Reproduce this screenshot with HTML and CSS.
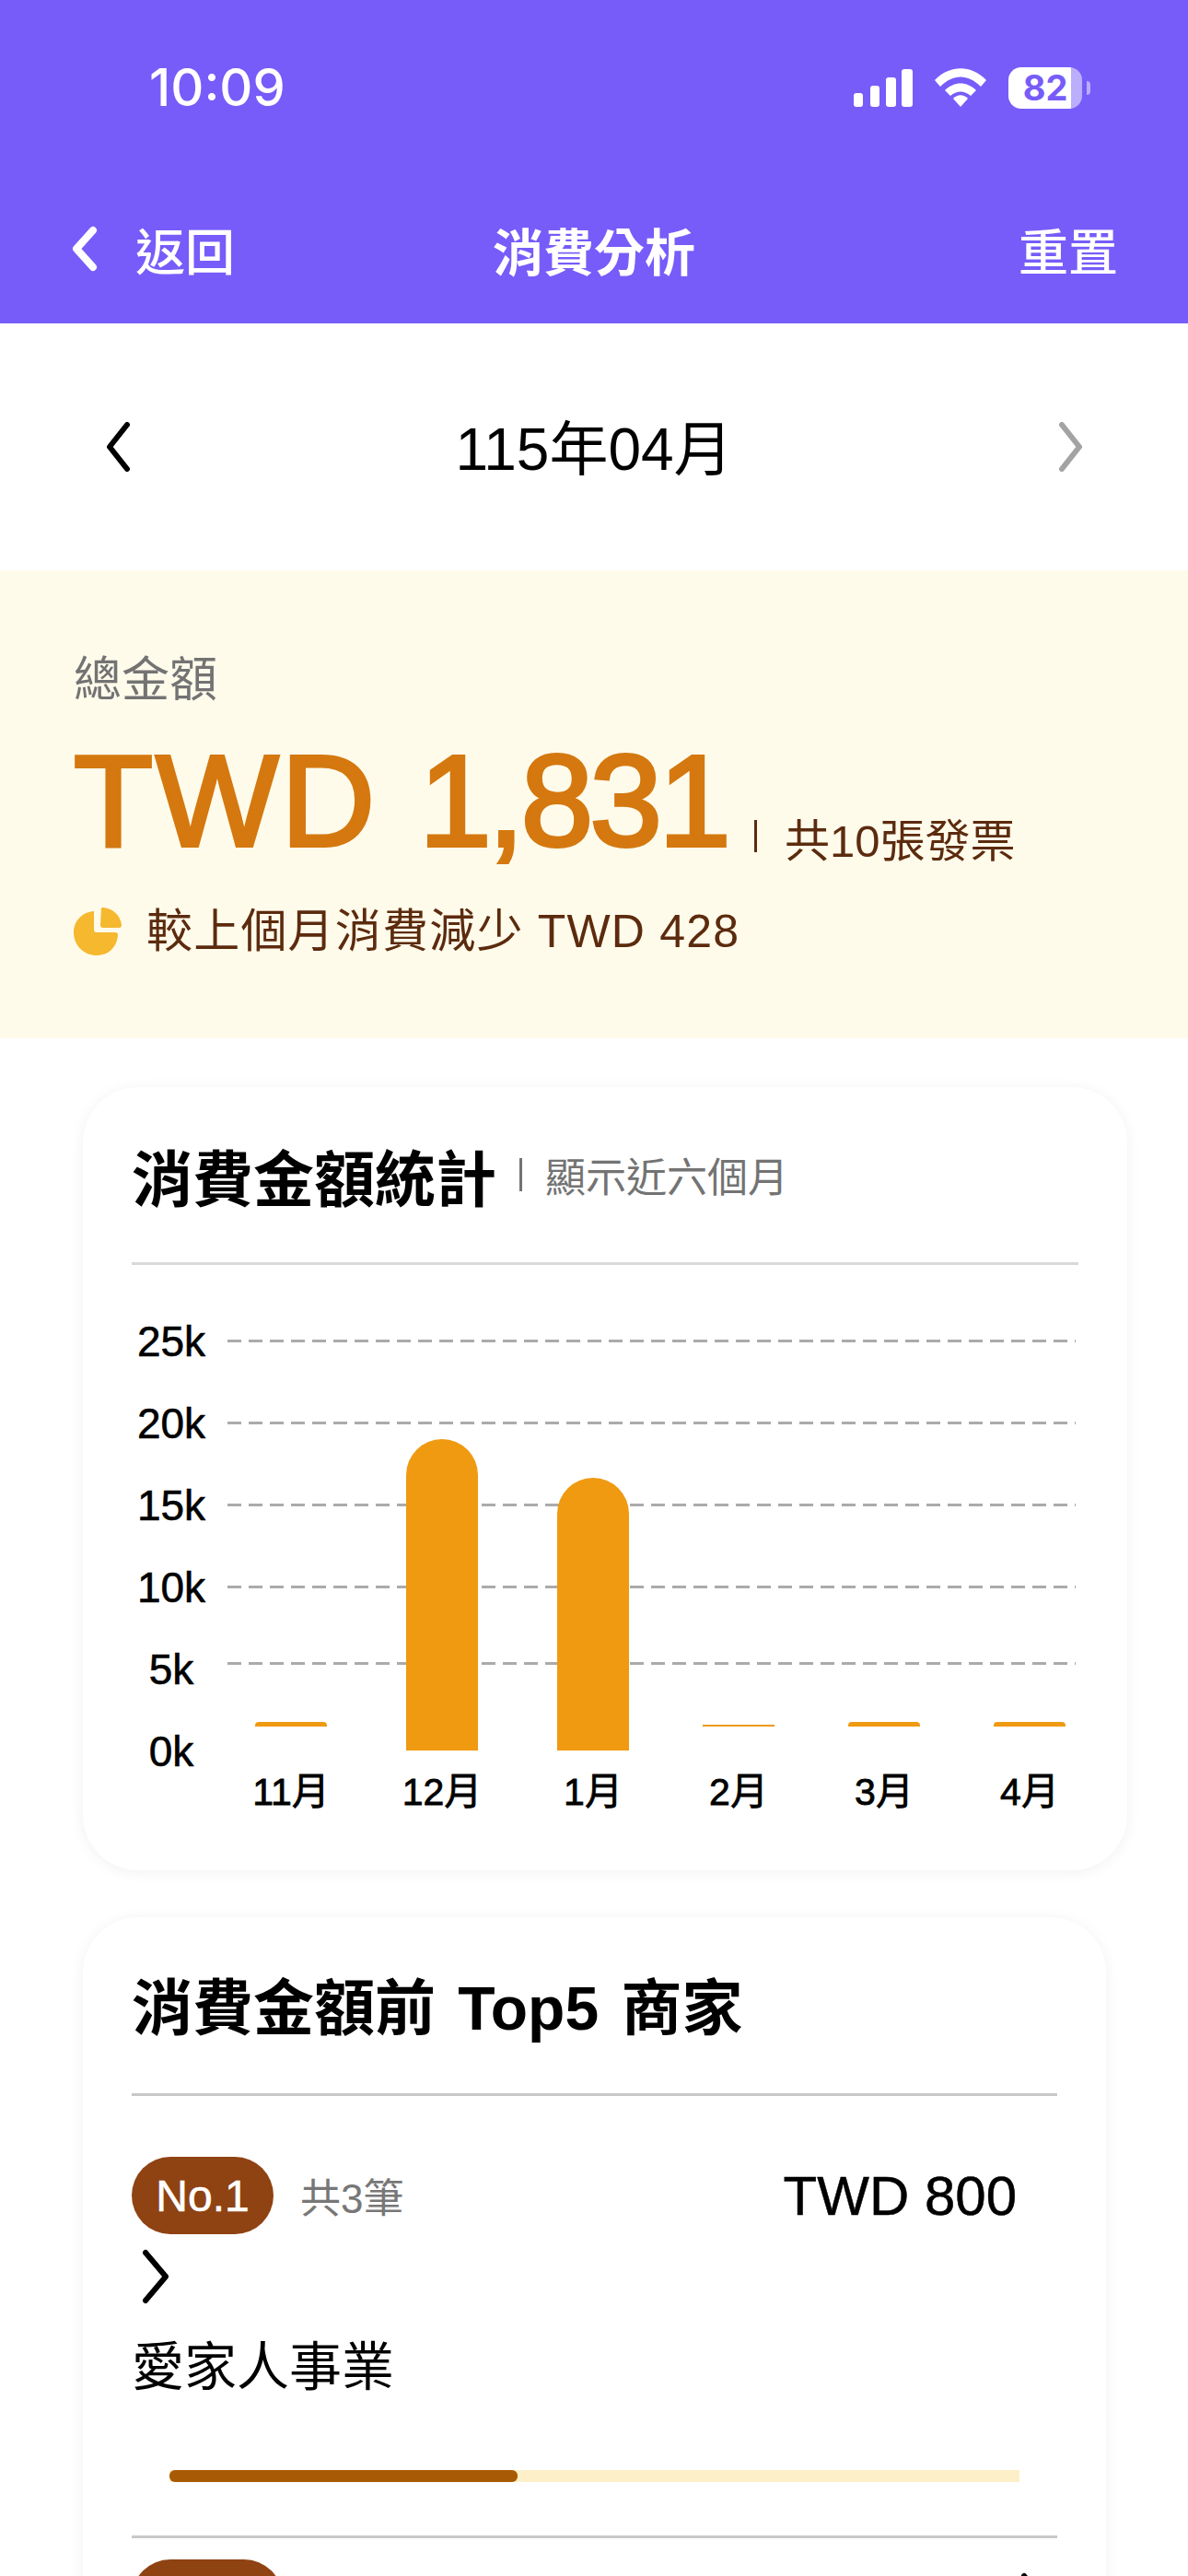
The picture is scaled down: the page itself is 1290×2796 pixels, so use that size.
FILE: index.html
```html
<!DOCTYPE html>
<html lang="zh-Hant">
<head>
    <meta charset="UTF-8">
    <title>消費分析</title>
    <link rel="stylesheet" href="styles.css">
</head>
<body>
    <header class="top-bar">
        <div class="status-bar">
            <span class="clock">10:09</span>
            <div class="status-icons">
                <svg class="signal" width="64" height="41" viewBox="0 0 64 41">
                    <rect x="0" y="26" width="10" height="15" rx="3"/>
                    <rect x="18" y="18" width="10" height="23" rx="3"/>
                    <rect x="35" y="9" width="11" height="32" rx="3"/>
                    <rect x="52" y="0" width="12" height="41" rx="3"/>
                </svg>
                <svg class="wifi" width="56" height="42" viewBox="0 0 56 42">
                    <path d="M0 13 C16 -4 40 -4 56 13 L50 20 C36 6 20 6 6 20 Z"/>
                    <path d="M11 24 C21 14 35 14 45 24 L39 30 C32 24 24 24 17 30 Z"/>
                    <path d="M20 33 C25 28 31 28 36 33 L28 42 Z"/>
                </svg>
                <div class="battery">
                    <div class="battery-body">
                        <span class="battery-num">82</span>
                    </div>
                    <div class="battery-cap"></div>
                </div>
            </div>
        </div>
        <nav class="nav-row">
            <div class="nav-back">
                <svg width="32" height="50" viewBox="0 0 32 50">
                    <path d="M25 5 L7 25 L25 45" fill="none" stroke="#fff" stroke-width="8" stroke-linecap="round" stroke-linejoin="round"/>
                </svg>
                <span>返回</span>
            </div>
            <div class="nav-title">消費分析</div>
            <div class="nav-reset">重置</div>
        </nav>
    </header>

    <section class="month-row">
        <svg width="30" height="54" viewBox="0 0 30 54">
            <path d="M26 3 L7 27 L26 51" fill="none" stroke="#000" stroke-width="6" stroke-linecap="round" stroke-linejoin="round"/>
        </svg>
        <div class="month-label">115年04月</div>
        <svg width="30" height="54" viewBox="0 0 30 54">
            <path d="M5 3 L24 27 L5 51" fill="none" stroke="#a3a3a3" stroke-width="6" stroke-linecap="round" stroke-linejoin="round"/>
        </svg>
    </section>

    <section class="summary">
        <div class="summary-label">總金額</div>
        <div class="summary-total">
            <span class="total-amount"><span class="total-cur">TWD</span> <span class="total-num">1,831</span></span>
            <span class="total-sep"></span>
            <span class="total-count">共10張發票</span>
        </div>
        <div class="summary-compare">
            <svg width="52" height="52" viewBox="0 0 52 52">
                <path d="M22 4 C9 5 0 15 0 27 C0 41 11 52 25 52 C38 52 47 43 48 30 C48 28 47 27 45 27 L25 27 C23 27 22 26 22 24 Z" fill="#f5b82e"/>
                <path d="M30 1 C30 0 31 0 32 0 C43 1 51 9 52 19 C52 21 51 22 49 22 L32 22 C30 22 29 21 29 19 Z" fill="#f5b82e"/>
            </svg>
            <span>較上個月消費減少 TWD 428</span>
        </div>
    </section>

    <section class="card chart-card">
        <div class="card-head">
            <h2>消費金額統計</h2>
            <span class="head-sep"></span>
            <span class="head-note">顯示近六個月</span>
        </div>
        <div class="chart">
            <div class="grid">
                <div class="grid-line"><span>25k</span><i></i></div>
                <div class="grid-line"><span>20k</span><i></i></div>
                <div class="grid-line"><span>15k</span><i></i></div>
                <div class="grid-line"><span>10k</span><i></i></div>
                <div class="grid-line line-low"><span>5k</span><i></i></div>
                <div class="grid-line"><span>0k</span></div>
            </div>
            <div class="bars">
                <div class="bar-col"><div class="bar bar-tiny"></div><div class="bar-gap"></div><span>11月</span></div>
                <div class="bar-col"><div class="bar bar-tall" style="height: 338px"></div><span>12月</span></div>
                <div class="bar-col"><div class="bar bar-tall" style="height: 296px"></div><span>1月</span></div>
                <div class="bar-col"><div class="bar bar-thin"></div><div class="bar-gap"></div><span>2月</span></div>
                <div class="bar-col"><div class="bar bar-tiny"></div><div class="bar-gap"></div><span>3月</span></div>
                <div class="bar-col"><div class="bar bar-tiny"></div><div class="bar-gap"></div><span>4月</span></div>
            </div>
        </div>
    </section>

    <section class="card shops-card">
        <div class="card-head">
            <h2>消費金額前 Top5 商家</h2>
        </div>
        <div class="shop">
            <div class="shop-top">
                <span class="rank">No.1</span>
                <span class="shop-count">共3筆</span>
                <span class="shop-amount">TWD 800</span>
            </div>
            <svg class="shop-arrow" width="34" height="60" viewBox="0 0 34 60">
                <path d="M5 4 L27 30 L5 56" fill="none" stroke="#000" stroke-width="6" stroke-linecap="round" stroke-linejoin="round"/>
            </svg>
            <div class="shop-name">愛家人事業</div>
            <div class="progress"><div class="progress-fill" style="width: 41%"></div></div>
        </div>
        <div class="shop shop-next">
            <div class="shop-top">
                <span class="rank rank-wide"></span>
                <svg class="shop-arrow-end" width="34" height="60" viewBox="0 0 34 60">
                    <path d="M5 4 L27 30 L5 56" fill="none" stroke="#000" stroke-width="6" stroke-linecap="round" stroke-linejoin="round"/>
                </svg>
            </div>
        </div>
    </section>
</body>
</html>
```

FILE: styles.css
```css
* {
    box-sizing: border-box;
}
html, body {
    height: 2796px;
    overflow: hidden;
}
body {
    margin: 0;
    background-color: #fff;
    font-family: "Liberation Sans", "Noto Sans CJK TC", sans-serif;
    color: #000;
}

/* purple header */
.top-bar {
    height: 351px;
    background-color: #775cfa;
    color: #fff;
    padding: 60px 76px 0 76px;
}
.status-bar {
    display: flex;
    justify-content: space-between;
    align-items: center;
    height: 70px;
    padding: 0 30px 0 86px;
}
.clock {
    font-family: Inter, sans-serif;
    font-size: 56px;
    font-weight: 500;
}
.status-icons {
    display: flex;
    align-items: center;
    gap: 24px;
    fill: #fff;
}
.battery {
    display: flex;
    align-items: center;
    gap: 5px;
}
.battery-body {
    width: 80px;
    height: 45px;
    border-radius: 14px;
    background: linear-gradient(to right, #fff 85%, #bbaefd 85%);
    display: flex;
    align-items: center;
    justify-content: center;
}
.battery-num {
    font-family: Inter, sans-serif;
    font-size: 38px;
    font-weight: 700;
    color: #775cfa;
}
.battery-cap {
    width: 4px;
    height: 15px;
    border-radius: 0 8px 8px 0;
    background-color: #bbaefd;
}
.nav-row {
    display: grid;
    grid-template-columns: 1fr auto 1fr;
    align-items: center;
    margin-top: 100px;
    height: 60px;
}
.nav-back {
    display: flex;
    align-items: center;
    gap: 39px;
    font-size: 54px;
    font-weight: 500;
}
.nav-title {
    font-size: 55px;
    font-weight: 700;
}
.nav-reset {
    font-size: 54px;
    font-weight: 500;
    text-align: right;
}

/* month picker */
.month-row {
    height: 268px;
    display: flex;
    justify-content: space-between;
    align-items: center;
    padding: 0 112px;
}
.month-label {
    font-size: 64px;
    padding-bottom: 6px;
}

/* yellow summary block */
.summary {
    height: 508px;
    background-color: #fffbeb;
    padding: 87px 80px 0;
}
.summary-label {
    font-size: 52px;
    line-height: 64px;
    color: #737373;
}
.summary-total {
    display: flex;
    align-items: flex-end;
    margin-top: 19px;
}
.total-amount {
    font-size: 141px;
    line-height: 160px;
    -webkit-text-stroke: 4px #d4780f;
    color: #d4780f;
}
.total-cur {
    letter-spacing: 3px;
    margin-right: 6px;
}
.total-num {
    letter-spacing: -3.6px;
}
.total-sep {
    width: 3px;
    height: 35px;
    margin: 0 30px 24px 29px;
    background-color: #5c2b0e;
}
.total-count {
    font-size: 49px;
    line-height: 60px;
    margin-bottom: 6px;
    color: #5c2b0e;
}
.summary-compare {
    display: flex;
    align-items: center;
    gap: 27px;
    margin-top: 26px;
    font-size: 50px;
    line-height: 72px;
    letter-spacing: 1.2px;
    color: #5c2b0e;
}

/* white cards */
.card {
    margin-left: 90px;
    background-color: #fff;
    border-radius: 60px;
    box-shadow: 0 2px 16px rgba(0,0,0,0.06);
    padding: 0 53px;
}
.chart-card {
    width: 1134px;
    height: 850px;
    margin-top: 53px;
}
.shops-card {
    width: 1111px;
    height: 800px;
    margin-top: 51px;
}
.card-head {
    display: flex;
    align-items: center;
    height: 193px;
    border-bottom: 3px solid #d9d9d9;
}
.shops-card .card-head {
    height: 194px;
    padding-bottom: 6px;
    margin-bottom: 43px;
    border-bottom-color: #c8c8c8;
}
.card-head h2 {
    margin: 0;
    font-size: 66px;
    font-weight: 700;
    word-spacing: 6px;
}
.head-sep {
    width: 3px;
    height: 36px;
    margin: 0 25px 0 25px;
    background-color: #737373;
}
.head-note {
    font-size: 44px;
    color: #737373;
}

/* bar chart */
.chart {
    position: relative;
    height: 600px;
}
.grid {
    position: absolute;
    left: 0;
    right: 0;
    top: 38px;
}
.grid-line {
    display: flex;
    align-items: center;
    height: 89px;
    font-size: 46px;
    -webkit-text-stroke: 0.6px #000;
}
.grid-line span {
    width: 86px;
    margin-right: 18px;
    text-align: center;
}
.grid-line i {
    flex: 1;
    height: 3px;
    margin-right: 3px;
    background: repeating-linear-gradient(to right, #ababab 0, #ababab 15px, transparent 15px, transparent 23px);
}
.line-low i {
    margin-bottom: 12px;
}
.bars {
    position: absolute;
    left: 134px;
    top: 0;
    height: 600px;
    display: flex;
    gap: 80px;
    align-items: flex-end;
}
.bar-col {
    width: 78px;
    display: flex;
    flex-direction: column;
    align-items: center;
    padding-bottom: 4px;
}
.bar-col:nth-child(-n+2) {
    margin-right: 6px;
}
.bar-col span {
    margin-top: 21px;
    white-space: nowrap;
    font-size: 41px;
    line-height: 48px;
    -webkit-text-stroke: 0.8px #000;
}
.bar {
    width: 78px;
    background-color: #ef9a11;
}
.bar-tall {
    border-radius: 39px 39px 0 0;
}
.bar-tiny {
    height: 5px;
    border-radius: 4px 4px 0 0;
}
.bar-thin {
    height: 2px;
}
.bar-gap {
    height: 26px;
}

/* shop ranking */
.shop {
    border-bottom: 3px solid #c8c8c8;
    padding-top: 23px;
    height: 437px;
}
.shop-top {
    display: flex;
    align-items: center;
    padding-right: 44px;
}
.rank {
    width: 154px;
    height: 84px;
    border-radius: 42px;
    background-color: #8f4212;
    color: #fff;
    font-size: 48px;
    -webkit-text-stroke: 0.6px #fff;
    display: flex;
    align-items: center;
    justify-content: center;
}
.rank-wide {
    width: 164px;
}
.shop-count {
    margin-left: 29px;
    font-size: 44px;
    color: #777;
}
.shop-amount {
    margin-left: auto;
    font-size: 60px;
    -webkit-text-stroke: 0.5px #000;
}
.shop-arrow {
    display: block;
    margin: 16px 0 0 10px;
}
.shop-next {
    border-bottom: none;
}
.shop-next .shop-top {
    align-items: flex-start;
    padding-right: 7px;
}
.shop-arrow-end {
    margin: 14px 0 0 auto;
}
.shop-name {
    margin-top: 32px;
    font-size: 57px;
    line-height: 72px;
}
.progress {
    height: 13px;
    margin: 76px 41px 0 41px;
    background-color: #fdf0c8;
}
.progress-fill {
    height: 13px;
    border-radius: 6px;
    background-color: #a85a04;
}
```
